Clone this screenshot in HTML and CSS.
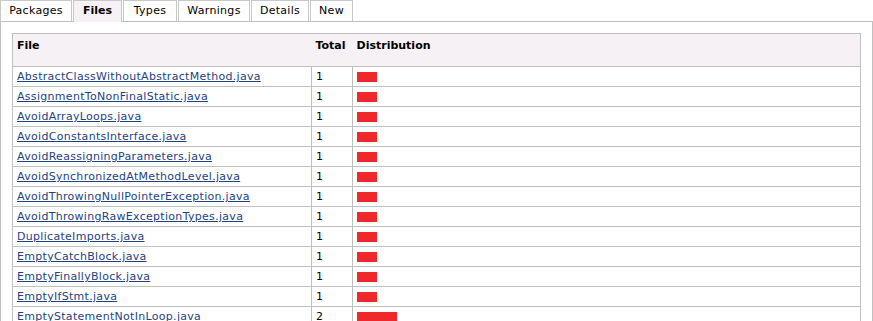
FILE: index.html
```html
<!DOCTYPE html>
<html>
<head>
<meta charset="utf-8">
<link rel="stylesheet" href="styles.css">
</head>
<body>
<div class="tabs">
  <a class="tab tab-packages">Packages</a>
  <a class="tab tab-files active">Files</a>
  <a class="tab tab-types">Types</a>
  <a class="tab tab-warnings">Warnings</a>
  <a class="tab tab-details">Details</a>
  <a class="tab tab-new">New</a>
</div>
<div class="panel">
  <table class="files">
    <colgroup>
      <col class="col-file">
      <col class="col-total">
      <col class="col-dist">
    </colgroup>
    <thead>
      <tr>
        <th>File</th>
        <th>Total</th>
        <th>Distribution</th>
      </tr>
    </thead>
    <tbody>
      <tr><td><a href="#">AbstractClassWithoutAbstractMethod.java</a></td><td>1</td><td><span class="bar" style="width:20px"></span></td></tr>
      <tr><td><a href="#">AssignmentToNonFinalStatic.java</a></td><td>1</td><td><span class="bar" style="width:20px"></span></td></tr>
      <tr><td><a href="#">AvoidArrayLoops.java</a></td><td>1</td><td><span class="bar" style="width:20px"></span></td></tr>
      <tr><td><a href="#">AvoidConstantsInterface.java</a></td><td>1</td><td><span class="bar" style="width:20px"></span></td></tr>
      <tr><td><a href="#">AvoidReassigningParameters.java</a></td><td>1</td><td><span class="bar" style="width:20px"></span></td></tr>
      <tr><td><a href="#">AvoidSynchronizedAtMethodLevel.java</a></td><td>1</td><td><span class="bar" style="width:20px"></span></td></tr>
      <tr><td><a href="#">AvoidThrowingNullPointerException.java</a></td><td>1</td><td><span class="bar" style="width:20px"></span></td></tr>
      <tr><td><a href="#">AvoidThrowingRawExceptionTypes.java</a></td><td>1</td><td><span class="bar" style="width:20px"></span></td></tr>
      <tr><td><a href="#">DuplicateImports.java</a></td><td>1</td><td><span class="bar" style="width:20px"></span></td></tr>
      <tr><td><a href="#">EmptyCatchBlock.java</a></td><td>1</td><td><span class="bar" style="width:20px"></span></td></tr>
      <tr><td><a href="#">EmptyFinallyBlock.java</a></td><td>1</td><td><span class="bar" style="width:20px"></span></td></tr>
      <tr><td><a href="#">EmptyIfStmt.java</a></td><td>1</td><td><span class="bar" style="width:20px"></span></td></tr>
      <tr><td><a href="#">EmptyStatementNotInLoop.java</a></td><td>2</td><td><span class="bar" style="width:40px"></span></td></tr>
    </tbody>
  </table>
</div>
</body>
</html>
```

FILE: styles.css
```css
html, body {
  margin: 0;
  padding: 0;
  background: #ffffff;
}

body {
  font-family: "DejaVu Sans", Verdana, sans-serif;
  font-size: 11px;
  color: #000000;
}

.tabs {
  display: flex;
  gap: 1px;
  border-bottom: 1px solid #c0c0c0;
  height: 21px;
}

.tab {
  display: block;
  height: 21px;
  line-height: 20px;
  padding: 0;
  text-align: center;
  letter-spacing: 0.3px;
  border: 1px solid #c8c8c8;
  border-bottom: none;
  color: #000000;
  background: #ffffff;
  box-sizing: border-box;
  cursor: pointer;
}

.tab-packages { width: 72px; }
.tab-files { width: 49px; }
.tab-types { width: 54px; }
.tab-warnings { width: 72px; }
.tab-details { width: 58px; }
.tab-new { width: 43px; }

.tab.active {
  font-weight: bold;
  letter-spacing: 0;
  background: #f6f1f5;
  height: 22px;
}

.panel {
  border: 1px solid #c0c0c0;
  border-top: none;
  padding: 11px;
  height: 400px;
}

.files {
  width: 100%;
  table-layout: fixed;
  border-collapse: collapse;
  border: 1px solid #c0c0c0;
}

.col-file { width: 299px; }
.col-total { width: 41px; }

.files th {
  background: #f6f1f5;
  text-align: left;
  vertical-align: top;
  font-weight: bold;
  height: 33px;
  padding: 5px 4px 0 4px;
  box-sizing: border-box;
  border-bottom: 1px solid #c0c0c0;
  white-space: nowrap;
}

.files td {
  border: 1px solid #c0c0c0;
  height: 19px;
  padding: 0 4px;
  line-height: 19px;
  letter-spacing: 0.3px;
  vertical-align: middle;
  white-space: nowrap;
}

.files a {
  color: #1f4282;
  text-decoration: underline;
}

.bar {
  display: inline-block;
  height: 10px;
  background: #ef2929;
  vertical-align: middle;
}
```
